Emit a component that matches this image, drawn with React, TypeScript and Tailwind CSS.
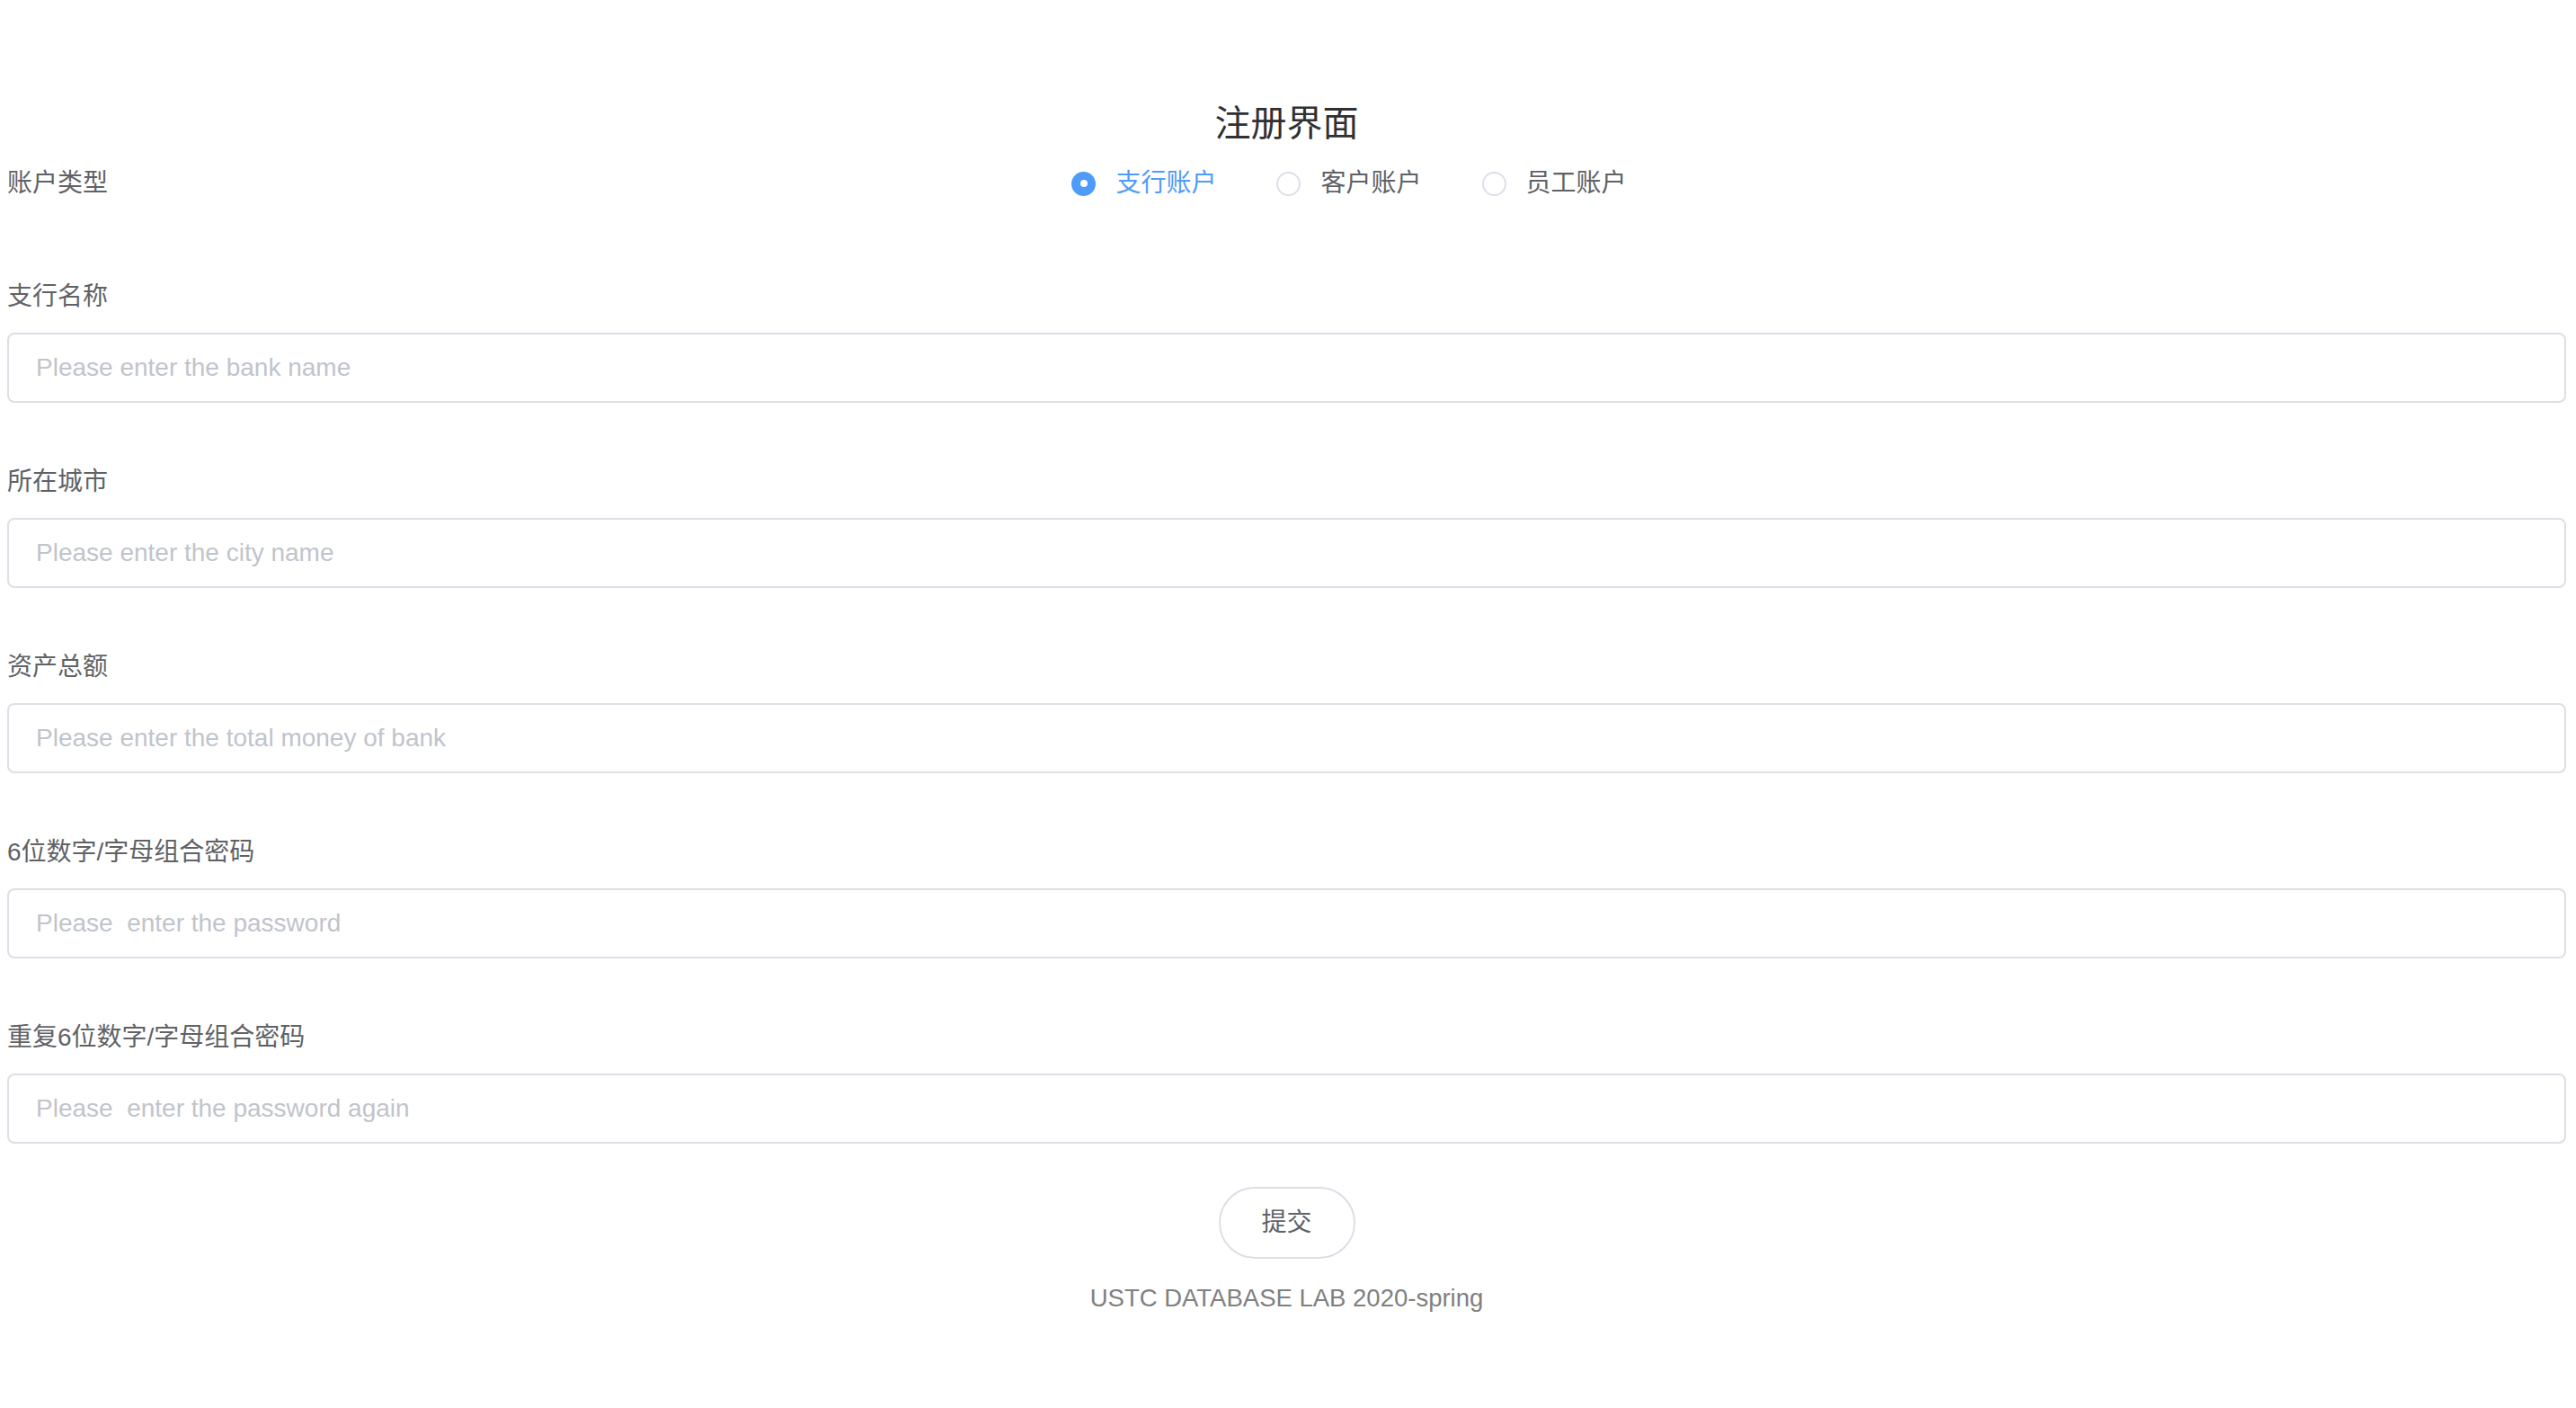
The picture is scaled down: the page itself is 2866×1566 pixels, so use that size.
import { useState } from "react";

const FONT = "font-['Liberation_Sans','Noto_Sans_CJK_SC',sans-serif]";

type Field = { key: string; label: string; placeholder: string; type?: string };

const fields: Field[] = [
  { key: "name", label: "支行名称", placeholder: "Please enter the bank name" },
  { key: "city", label: "所在城市", placeholder: "Please enter the city name" },
  { key: "money", label: "资产总额", placeholder: "Please enter the total money of bank" },
  { key: "pwd", label: "6位数字/字母组合密码", placeholder: "Please  enter the password", type: "password" },
  { key: "pwd2", label: "重复6位数字/字母组合密码", placeholder: "Please  enter the password again", type: "password" },
];

const accountTypes = ["支行账户", "客户账户", "员工账户"];

export default function App() {
  const [kind, setKind] = useState(0);
  const [values, setValues] = useState<Record<string, string>>({});

  return (
    <div className={`min-h-screen bg-white pl-[8px] pr-[11px] pt-[109px] ${FONT}`}>
      <h2 className="text-center text-[40px] leading-[56px] text-[#303133] font-normal">注册界面</h2>

      {/* account type row */}
      <div className="flex items-center h-[78px] mb-[67px]">
        <div className="w-[139px] shrink-0 text-[28px] text-[#606266]">账户类型</div>
        <div className="flex-1 flex justify-center items-center gap-[67px]">
          {accountTypes.map((t, i) => {
            const on = kind === i;
            return (
              <label key={t} className="flex items-center cursor-pointer" onClick={() => setKind(i)}>
                <span
                  className={
                    on
                      ? "w-[27px] h-[27px] rounded-full bg-[#4f9bf8] flex items-center justify-center"
                      : "w-[27px] h-[27px] rounded-full border-2 border-[#dcdfe6] bg-white"
                  }
                >
                  {on && <span className="w-[8px] h-[8px] rounded-full bg-white" />}
                </span>
                <span className={`ml-[22px] text-[28px] leading-[40px] ${on ? "text-[#4f9bf8]" : "text-[#606266]"}`}>{t}</span>
              </label>
            );
          })}
        </div>
      </div>

      {fields.map((f, i) => (
        <div key={f.key} className={i === fields.length - 1 ? "mb-[48px]" : "mb-[68px]"}>
          <div className="h-[40px] leading-[40px] mb-[20px] text-[28px] text-[#606266]">{f.label}</div>
          <input
            type={f.type || "text"}
            value={values[f.key] || ""}
            onChange={(e) => setValues({ ...values, [f.key]: e.target.value })}
            placeholder={f.placeholder}
            className="block w-full h-[78px] rounded-[8px] border-2 border-[#dcdfe6] bg-white pl-[30px] pr-[30px] text-[28px] text-[#606266] outline-none placeholder:text-[#c0c4cc] focus:border-[#409eff]"
          />
        </div>
      ))}

      <div className="flex justify-center">
        <button className="w-[152px] h-[80px] rounded-full border-2 border-[#dcdfe6] bg-white text-[28px] text-[#606266]">
          提交
        </button>
      </div>

      <div className="mt-[24px] text-center text-[27.5px] leading-[40px] text-[#808080]">USTC DATABASE LAB 2020-spring</div>
    </div>
  );
}
